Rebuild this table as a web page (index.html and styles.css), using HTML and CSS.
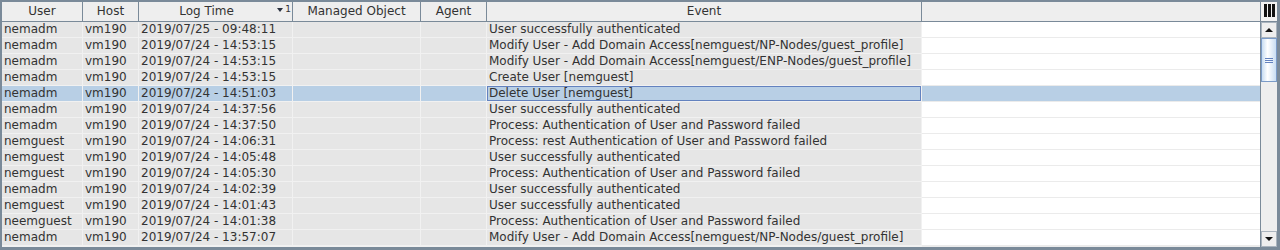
FILE: index.html
```html
<!DOCTYPE html>
<html lang="en">
<head>
  <meta charset="UTF-8" />
  <title>Audit Log</title>
  <link rel="stylesheet" href="styles.css">
</head>
<body>
  <div class="frame">
    <div class="viewport">
      <table class="log">
        <colgroup>
          <col style="width:81px">
          <col style="width:56px">
          <col style="width:154px">
          <col style="width:128px">
          <col style="width:66px">
          <col style="width:435px">
          <col style="width:338px">
        </colgroup>
        <thead>
          <tr>
            <th>User</th>
            <th>Host</th>
            <th class="sorted">Log Time<span class="sort-mark"><span class="tri"></span>1</span></th>
            <th>Managed Object</th>
            <th>Agent</th>
            <th>Event</th>
            <th class="filler"></th>
          </tr>
        </thead>
        <tbody>
          <tr><td>nemadm</td><td>vm190</td><td>2019/07/25 - 09:48:11</td><td></td><td></td><td>User successfully authenticated</td><td class="blank"></td></tr>
          <tr><td>nemadm</td><td>vm190</td><td>2019/07/24 - 14:53:15</td><td></td><td></td><td>Modify User - Add Domain Access[nemguest/NP-Nodes/guest_profile]</td><td class="blank"></td></tr>
          <tr><td>nemadm</td><td>vm190</td><td>2019/07/24 - 14:53:15</td><td></td><td></td><td>Modify User - Add Domain Access[nemguest/ENP-Nodes/guest_profile]</td><td class="blank"></td></tr>
          <tr><td>nemadm</td><td>vm190</td><td>2019/07/24 - 14:53:15</td><td></td><td></td><td>Create User [nemguest]</td><td class="blank"></td></tr>
          <tr class="sel"><td>nemadm</td><td>vm190</td><td>2019/07/24 - 14:51:03</td><td></td><td></td><td class="focus">Delete User [nemguest]</td><td class="blank"></td></tr>
          <tr><td>nemadm</td><td>vm190</td><td>2019/07/24 - 14:37:56</td><td></td><td></td><td>User successfully authenticated</td><td class="blank"></td></tr>
          <tr><td>nemadm</td><td>vm190</td><td>2019/07/24 - 14:37:50</td><td></td><td></td><td>Process: Authentication of User and Password failed</td><td class="blank"></td></tr>
          <tr><td>nemguest</td><td>vm190</td><td>2019/07/24 - 14:06:31</td><td></td><td></td><td>Process: rest Authentication of User and Password failed</td><td class="blank"></td></tr>
          <tr><td>nemguest</td><td>vm190</td><td>2019/07/24 - 14:05:48</td><td></td><td></td><td>User successfully authenticated</td><td class="blank"></td></tr>
          <tr><td>nemguest</td><td>vm190</td><td>2019/07/24 - 14:05:30</td><td></td><td></td><td>Process: Authentication of User and Password failed</td><td class="blank"></td></tr>
          <tr><td>nemadm</td><td>vm190</td><td>2019/07/24 - 14:02:39</td><td></td><td></td><td>User successfully authenticated</td><td class="blank"></td></tr>
          <tr><td>nemguest</td><td>vm190</td><td>2019/07/24 - 14:01:43</td><td></td><td></td><td>User successfully authenticated</td><td class="blank"></td></tr>
          <tr><td>neemguest</td><td>vm190</td><td>2019/07/24 - 14:01:38</td><td></td><td></td><td>Process: Authentication of User and Password failed</td><td class="blank"></td></tr>
          <tr><td>nemadm</td><td>vm190</td><td>2019/07/24 - 13:57:07</td><td></td><td></td><td>Modify User - Add Domain Access[nemguest/NP-Nodes/guest_profile]</td><td class="blank"></td></tr>
          <tr><td></td><td></td><td></td><td></td><td></td><td></td><td class="blank"></td></tr>
        </tbody>
      </table>
    </div>
    <div class="vscroll">
      <div class="corner"><span></span><span></span><span></span></div>
      <div class="arrow up"></div>
      <div class="track">
        <div class="thumb"><i></i><i></i><i></i></div>
      </div>
      <div class="arrow down"></div>
    </div>
  </div>
</body>
</html>
```
FILE: styles.css
```css
/* Swing "Ocean" look: grey cells, blue-grey frame */
body {
  margin: 0;
  background: #fff;
  color: #333;
  font-family: "DejaVu Sans", Verdana, sans-serif;
  font-size: 12px;
}
.frame {
  display: flex;
  width: 1280px;
  height: 250px;
  box-sizing: border-box;
  border-style: solid;
  border-color: #7a8a99;
  border-width: 2px 3px 3px 2px;
  overflow: hidden;
}
.viewport {
  width: 1258px;
  overflow: hidden;
}
.log {
  width: 1258px;
  table-layout: fixed;
  border-collapse: separate;
  border-spacing: 0;
}
.log th {
  padding: 0 2px;
  line-height: 19px;
  background: #eeeeee;
  border-right: 1px solid #7a8a99;
  border-bottom: 1px solid #7a8a99;
  font-weight: normal;
  text-align: center;
  white-space: nowrap;
  overflow: hidden;
}
.log th.filler {
  border-right: none;
}
.log th.sorted {
  position: relative;
  padding-right: 20px;
}
.sort-mark {
  position: absolute;
  right: 1px;
  top: 3px;
  display: flex;
  align-items: flex-start;
  gap: 2px;
  font-size: 9px;
  line-height: 9px;
}
.tri {
  margin-top: 3px;
  border-left: 3.5px solid transparent;
  border-right: 3.5px solid transparent;
  border-top: 4px solid #2a3140;
}
.log td {
  padding: 0 2px;
  line-height: 15px;
  background: #e6e6e6;
  border-right: 1px solid #f1f1f1;
  border-bottom: 1px solid #f1f1f1;
  white-space: nowrap;
  overflow: hidden;
}
.log td.blank {
  background: #fff;
  border-right: none;
  border-bottom-color: #ebebeb;
}
.log tr.sel td {
  background: #b8cfe5;
}
.log td.focus {
  box-shadow: inset 0 0 0 1px #6382bf;
}

/* vertical scrollbar */
.vscroll {
  width: 17px;
  box-sizing: border-box;
  display: flex;
  flex-direction: column;
  border-left: 1px solid #7a8a99;
  background: #eeeeee;
}
.corner {
  height: 20px;
  box-sizing: border-box;
  border-bottom: 1px solid #7a8a99;
  background: #f2f2f2;
  display: flex;
  justify-content: center;
  gap: 1px;
  padding-top: 2px;
}
.corner span {
  width: 3px;
  height: 13px;
  background: #111;
}
.arrow {
  height: 16px;
  box-sizing: border-box;
  border: 1px solid #aab4be;
  background: #eeeeee;
  display: flex;
  align-items: center;
  justify-content: center;
}
.arrow::after {
  content: "";
  border-left: 4px solid transparent;
  border-right: 4px solid transparent;
}
.arrow.up::after {
  border-bottom: 4px solid #111;
}
.arrow.down::after {
  border-top: 4px solid #111;
}
.track {
  flex: 1;
}
.thumb {
  height: 44px;
  box-sizing: border-box;
  border: 1px solid #7b9bc8;
  background: linear-gradient(to right, #c8ddf2, #ffffff 40%, #c8ddf2);
  display: flex;
  flex-direction: column;
  align-items: center;
  justify-content: center;
  gap: 1px;
}
.thumb i {
  width: 8px;
  height: 1px;
  background: #6382bf;
}
```
